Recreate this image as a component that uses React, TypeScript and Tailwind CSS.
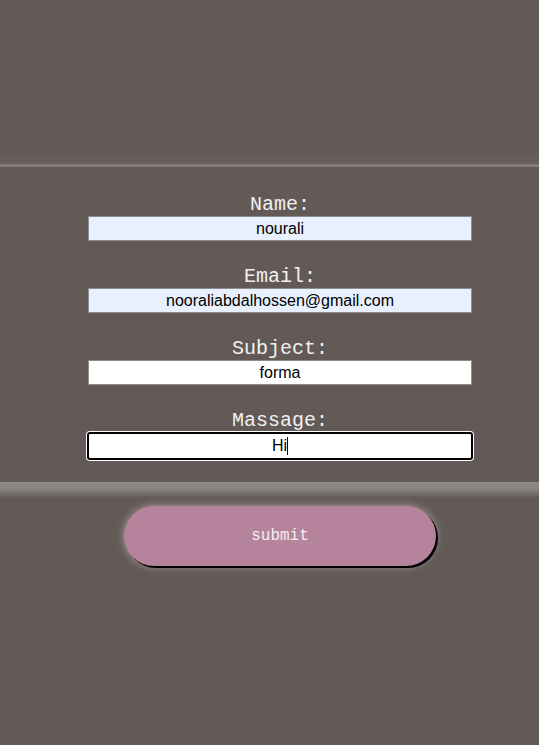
type Field = {
  label: string;
  value: string;
  autofill?: boolean;
};

const fields: Field[] = [
  { label: "Name:", value: "nourali", autofill: true },
  { label: "Email:", value: "nooraliabdalhossen@gmail.com", autofill: true },
  { label: "Subject:", value: "forma" },
];

export default function App() {
  return (
    <div className="min-h-[745px] w-full bg-[#635a57] font-['Liberation_Mono',monospace] pl-[21px]">
      {/* top band */}
      <div className="h-[152px]" />
      <div className="h-[12px] -ml-[21px] bg-gradient-to-b from-[#635a57] to-[#6a615e]" />
      <div className="h-[3px] -ml-[21px] bg-[#847c78]" />

      <form className="flex flex-col items-center pt-[26px] pb-[22px]" onSubmit={(e) => e.preventDefault()}>
        {fields.map((f) => (
          <div key={f.label} className="flex flex-col items-center mb-[24px]">
            <label className="text-[20px] leading-[23px] text-[#f0f0f0]">{f.label}</label>
            <input
              readOnly
              value={f.value}
              className={
                "w-[384px] h-[25px] border border-[#8d8d8d] text-center text-[16px] text-black font-['Liberation_Sans',Arial,sans-serif] outline-none " +
                (f.autofill ? "bg-[#e8f0fe]" : "bg-white")
              }
            />
          </div>
        ))}
        <div className="flex flex-col items-center">
          <label className="text-[20px] leading-[23px] text-[#f0f0f0]">Massage:</label>
          <div className="w-[386px] h-[28px] rounded-[3px] border-2 border-black bg-white ring-1 ring-white flex items-center justify-center text-[16px] text-black font-['Liberation_Sans',Arial,sans-serif]">
            <span>Hi</span>
            <span className="w-px h-[18px] bg-black" />
          </div>
        </div>
      </form>

      {/* bottom band */}
      <div className="h-[16px] -ml-[21px] bg-gradient-to-b from-[#8f8b87] via-[#86807c] to-[#635a57]" />

      <div className="flex justify-center pt-[8px]">
        <button
          type="submit"
          className="w-[312px] h-[60px] rounded-full bg-[#b5839b] text-[16px] text-[#f4f0f2] font-['Liberation_Mono',monospace] shadow-[2px_2px_0_#000,0_0_8px_rgba(210,205,200,0.6)]"
        >
          submit
        </button>
      </div>
    </div>
  );
}
